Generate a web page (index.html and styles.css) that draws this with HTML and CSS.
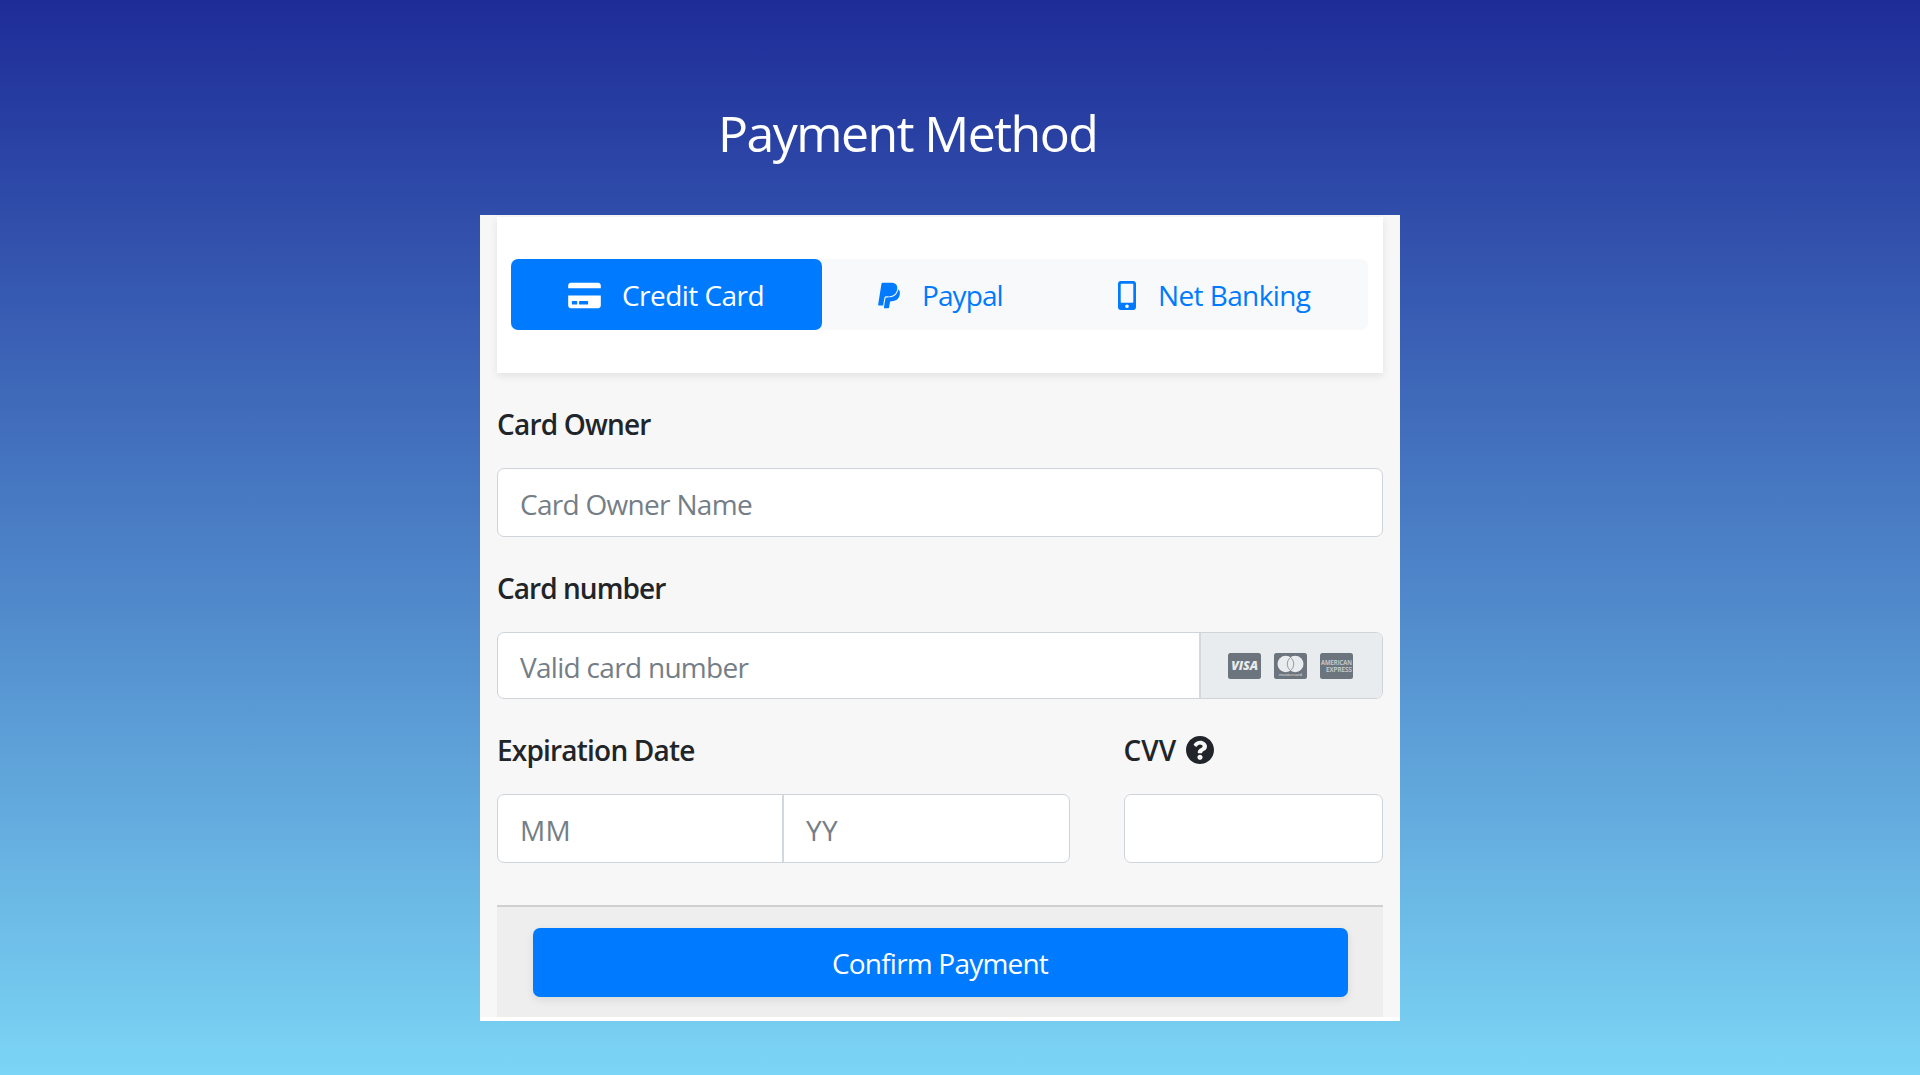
FILE: index.html
```html
<!DOCTYPE html>
<html lang="en">
<head>
<meta charset="utf-8">
<title>Payment Method</title>
<link rel="stylesheet" href="styles.css">
</head>
<body>
<main class="page">
  <h1 class="title">Payment Method</h1>
  <form class="panel">
    <div class="tab-card">
      <nav class="tabs">
        <a class="tab tab-active"><svg class="icon-card" viewBox="0 0 576 512"><path d="M0 432c0 26.500 21.500 48 48 48h480c26.500 0 48-21.500 48-48V256H0v176zm192-68c0-6.600 5.400-12 12-12h136c6.600 0 12 5.400 12 12v40c0 6.600-5.400 12-12 12H204c-6.600 0-12-5.400-12-12v-40zm-128 0c0-6.600 5.400-12 12-12h72c6.600 0 12 5.400 12 12v40c0 6.600-5.400 12-12 12H76c-6.600 0-12-5.400-12-12v-40zM576 80v48H0V80c0-26.500 21.500-48 48-48h480c26.500 0 48 21.500 48 48z"/></svg><span class="t-credit">Credit Card</span></a>
        <a class="tab tab-paypal"><svg class="icon-paypal" viewBox="0 0 384 512"><path d="M111.400 295.900c-3.500 19.200-17.400 108.700-21.500 134-.3 1.800-1 2.500-3 2.500H12.300c-7.600 0-13.100-6.600-12.100-13.900L58.800 46.600c1.500-9.600 10.100-16.900 20-16.900 152.300 0 165.100-3.700 204 11.400 60.100 23.300 65.600 79.500 44 140.300-21.500 62.600-72.500 89.500-140.100 90.300-43.400.7-69.500-7-75.300 24.200zM357.100 152c-1.800-1.300-2.500-1.800-3 1.300-2 11.400-5.100 22.500-8.800 33.600-39.900 113.800-150.500 103.900-204.500 103.900-6.100 0-10.100 3.300-10.900 9.400-22.600 140.400-27.100 169.700-27.100 169.700-1 7.100 3.500 12.900 10.600 12.900h63.500c8.600 0 15.700-6.300 17.400-14.900.7-5.400-1.100 6.100 14.400-91.300 4.600-22 14.300-19.700 29.300-19.700 71 0 126.400-28.800 142.900-112.300 6.500-34.800 4.600-71.400-23.800-92.600z"/></svg><span class="t-paypal">Paypal</span></a>
        <a class="tab tab-bank"><svg class="icon-phone" viewBox="0 0 320 512"><path d="M272 0H48C21.500 0 0 21.500 0 48v416c0 26.500 21.500 48 48 48h224c26.500 0 48-21.500 48-48V48c0-26.500-21.500-48-48-48zM160 480c-17.700 0-32-14.300-32-32s14.300-32 32-32 32 14.300 32 32-14.300 32-32 32zm112-108c0 6.600-5.400 12-12 12H60c-6.600 0-12-5.400-12-12V60c0-6.600 5.400-12 12-12h200c6.600 0 12 5.400 12 12v312z"/></svg><span class="t-bank">Net Banking</span></a>
      </nav>
    </div>
    <label class="label"><span>Card Owner</span></label>
    <div class="field"><span class="placeholder">Card Owner Name</span></div>
    <label class="label"><span class="t-number">Card number</span></label>
    <div class="field field-number">
      <span class="placeholder number-text">Valid card number</span>
      <div class="brands">
        <svg class="brand" viewBox="0 0 33 26"><rect width="33" height="26" rx="2.500" fill="#6c757d"/><text x="3.200" y="17.300" textLength="27" lengthAdjust="spacingAndGlyphs" class="visa">VISA</text></svg>
        <svg class="brand" viewBox="0 0 33 26"><rect width="33" height="26" rx="2.500" fill="#6c757d"/><circle cx="11.700" cy="11" r="8.200" fill="#e9ecef"/><circle cx="21.300" cy="11" r="8.200" fill="#e9ecef"/><path d="M16.500 4.500a8.200 8.200 0 0 1 0 13a8.200 8.200 0 0 1 0-13z" fill="#e9ecef" stroke="#6c757d" stroke-width=".7"/><text x="5" y="23" textLength="23" lengthAdjust="spacingAndGlyphs" class="mc">mastercard</text></svg>
        <svg class="brand" viewBox="0 0 33 26"><rect width="33" height="26" rx="2.500" fill="#6c757d"/><text x="1" y="12" textLength="31" lengthAdjust="spacingAndGlyphs" class="amex">AMERICAN</text><text x="6" y="18.600" textLength="26" lengthAdjust="spacingAndGlyphs" class="amex">EXPRESS</text></svg>
      </div>
    </div>
    <div class="row">
      <div class="expiry">
        <label class="label"><span>Expiration Date</span></label>
        <div class="field field-split"><div class="half"><span class="placeholder t-short">MM</span></div><div class="half half-year"><span class="placeholder t-short">YY</span></div></div>
      </div>
      <div class="cvv">
        <label class="label"><span class="t-cvv">CVV</span><svg class="icon-help" viewBox="8 8 496 496"><path d="M504 256c0 136.997-111.043 248-248 248S8 392.997 8 256C8 119.083 119.043 8 256 8s248 111.083 248 248zM262.655 90c-54.497 0-89.255 22.957-116.549 63.758-3.536 5.286-2.353 12.415 2.715 16.258l34.699 26.310c5.205 3.947 12.621 3.008 16.665-2.122 17.864-22.658 30.113-35.797 57.303-35.797 20.429 0 45.698 13.148 45.698 32.958 0 14.976-12.363 22.667-32.534 33.976C247.128 238.528 216 254.941 216 296v4c0 6.627 5.373 12 12 12h56c6.627 0 12-5.373 12-12v-1.333c0-28.462 83.186-29.647 83.186-106.667 0-58.002-60.165-102-116.531-102zM256 338c-25.365 0-46 20.635-46 46 0 25.364 20.635 46 46 46s46-20.636 46-46c0-25.365-20.635-46-46-46z"/></svg></label>
        <div class="field"></div>
      </div>
    </div>
    <footer class="footer"><button class="confirm" type="button">Confirm Payment</button></footer>
  </form>
</main>
</body>
</html>
```

FILE: styles.css
```css
* { box-sizing: border-box; }
body {
  margin: 0;
  height: 1075px;
  overflow: hidden;
  background: linear-gradient(#1e2c98, #5089cb 56%, #7bd5f5);
  font-family: "Open Sans", "Noto Sans", sans-serif;
  font-size: 28px;
  color: #212529;
}
.page { padding: 0 520px 0 480px; }
.title {
  margin: 0;
  padding: 98px 0 0 238px;
  height: 215px;
  font-size: 50px;
  line-height: 70px;
  font-weight: 400;
  letter-spacing: -1.55px;
  color: #fff;
  white-space: nowrap;
}
.panel {
  width: 920px;
  height: 806px;
  padding: 2px 17px 4px;
  background: #f7f7f7;
  border-bottom: 4px solid #fff;
  overflow: hidden;
}
.tab-card {
  height: 156px;
  padding: 42px 15px 42px 14px;
  background: #fff;
  box-shadow: 0 3px 8px rgba(0, 0, 0, .09);
}
.tabs {
  display: flex;
  height: 71px;
  border-radius: 7px;
  background: #f8f9fb;
}
.tab {
  display: flex;
  align-items: center;
  padding-top: 1px;
  color: #007bff;
  white-space: nowrap;
}
.tab svg { fill: currentColor; }
.tab-active {
  width: 311px;
  padding-left: 56.5px;
  border-radius: 7px;
  background: #007bff;
  color: #fff;
}
.icon-card { width: 33px; height: 29px; margin-right: 21.5px; }
.t-credit { letter-spacing: -.55px; }
.tab-paypal { width: 239px; padding-left: 56px; }
.icon-paypal { width: 22px; height: 29px; margin-right: 22px; }
.t-paypal { letter-spacing: -.9px; }
.tab-bank { padding-left: 57px; }
.icon-phone { width: 18px; height: 29px; margin-right: 22px; }
.t-bank { letter-spacing: -.6px; }
.label {
  display: flex;
  align-items: center;
  height: 40px;
  margin-top: 31px;
  font-weight: 600;
  letter-spacing: -.8px;
  white-space: nowrap;
}
.t-number { letter-spacing: -.95px; }
.field {
  display: flex;
  align-items: center;
  height: 69px;
  margin-top: 24px;
  padding-left: 22px;
  border: 1.5px solid #ced4da;
  border-radius: 7px;
  background: #fff;
  white-space: nowrap;
}
.placeholder {
  padding-top: 2px;
  color: #757e86;
  letter-spacing: -.7px;
}
.field-number { height: 67px; }
.number-text { flex: 1; }
.brands {
  display: flex;
  align-items: center;
  gap: 13px;
  width: 183px;
  height: 100%;
  padding-left: 27px;
  border-left: 2px solid #d3d8dd;
  border-radius: 0 6px 6px 0;
  background: #e9ecef;
}
.brand { width: 33px; height: 26px; }
.brand text { fill: #e9ecef; font-family: "Open Sans", sans-serif; letter-spacing: 0; }
.visa { font-size: 13px; font-weight: 800; font-style: italic; }
.mc { font-size: 4px; }
.amex { font-size: 7px; font-weight: 600; opacity: .8; }
.row { display: flex; gap: 53.5px; }
.expiry { width: 573px; }
.cvv { width: 259.5px; }
.field-split { padding: 0; }
.half {
  display: flex;
  align-items: center;
  width: 284px;
  height: 100%;
  padding-left: 22px;
}
.half-year { border-left: 2px solid #d3d8dd; }
.t-short { letter-spacing: .3px; }
.t-cvv { letter-spacing: 0; }
.icon-help { width: 28px; height: 28px; margin-left: 10px; fill: currentColor; }
.footer {
  height: 112px;
  margin-top: 42px;
  padding: 21px 35.5px;
  border-top: 2px solid #d0d0d0;
  background: #eee;
}
.confirm {
  display: block;
  width: 100%;
  height: 69px;
  padding: 0;
  border: 0;
  border-radius: 7px;
  background: #007bff;
  color: #fff;
  font: inherit;
  letter-spacing: -.8px;
  box-shadow: 0 3px 8px rgba(0, 0, 0, .09);
}
```
